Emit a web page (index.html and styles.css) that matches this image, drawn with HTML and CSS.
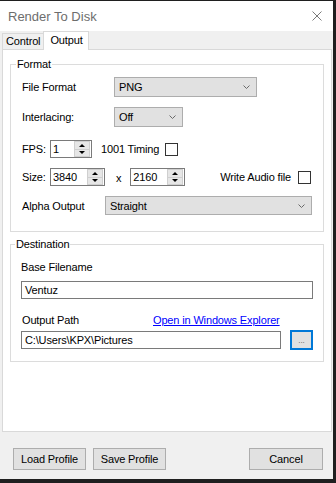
FILE: index.html
```html
<!DOCTYPE html>
<html lang="en">
<head>
    <meta charset="UTF-8">
    <meta name="viewport" content="width=device-width, initial-scale=1.0">
    <title>Render To Disk</title>
    <link rel="stylesheet" href="styles.css">
</head>
<body>
    <div class="window">
        <div class="titlebar">
            <span class="title">Render To Disk</span>
            <svg class="close" width="10" height="10" viewBox="0 0 10 10">
                <path d="M0.5 0.5 L9.5 9.5 M9.5 0.5 L0.5 9.5" stroke="#7a7a7a" stroke-width="1" fill="none"/>
            </svg>
        </div>

        <div class="tabs">
            <div class="tab">Control</div>
            <div class="tab active">Output</div>
        </div>

        <div class="panel">
            <fieldset class="group group-format">
                <legend>Format</legend>

                <div class="row row-file">
                    <span class="lbl lbl-combo">File Format</span>
                    <div class="combo combo-file">
                        <span>PNG</span>
                        <svg class="chev" width="7" height="4" viewBox="0 0 7 4"><path d="M0.5 0.5 L3.5 3.5 L6.5 0.5" stroke="#6a6a6a" fill="none"/></svg>
                    </div>
                </div>

                <div class="row row-inter">
                    <span class="lbl lbl-combo">Interlacing:</span>
                    <div class="combo combo-inter">
                        <span>Off</span>
                        <svg class="chev" width="7" height="4" viewBox="0 0 7 4"><path d="M0.5 0.5 L3.5 3.5 L6.5 0.5" stroke="#6a6a6a" fill="none"/></svg>
                    </div>
                </div>

                <div class="row row-fps">
                    <span class="lbl lbl-short">FPS:</span>
                    <div class="spin spin-fps">
                        <span class="spin-val">1</span>
                        <div class="spin-btns">
                            <span class="spin-up"></span>
                            <span class="spin-down"></span>
                        </div>
                    </div>
                    <span class="timing">1001 Timing</span>
                    <span class="check"></span>
                </div>

                <div class="row row-size">
                    <span class="lbl lbl-short">Size:</span>
                    <div class="spin spin-size">
                        <span class="spin-val">3840</span>
                        <div class="spin-btns">
                            <span class="spin-up"></span>
                            <span class="spin-down"></span>
                        </div>
                    </div>
                    <span class="times">x</span>
                    <div class="spin spin-size">
                        <span class="spin-val">2160</span>
                        <div class="spin-btns">
                            <span class="spin-up"></span>
                            <span class="spin-down"></span>
                        </div>
                    </div>
                    <span class="audio">Write Audio file</span>
                    <span class="check"></span>
                </div>

                <div class="row row-alpha">
                    <span class="lbl lbl-alpha">Alpha Output</span>
                    <div class="combo combo-alpha">
                        <span>Straight</span>
                        <svg class="chev" width="7" height="4" viewBox="0 0 7 4"><path d="M0.5 0.5 L3.5 3.5 L6.5 0.5" stroke="#6a6a6a" fill="none"/></svg>
                    </div>
                </div>
            </fieldset>

            <fieldset class="group group-dest">
                <legend>Destination</legend>

                <div class="field-label first">Base Filename</div>
                <div class="textbox">Ventuz</div>

                <div class="field-label path-head">
                    <span class="path-lbl">Output Path</span>
                    <a href="#" class="explorer">Open in Windows Explorer</a>
                </div>
                <div class="path-row">
                    <div class="textbox textbox-path">C:\Users\KPX\Pictures</div>
                    <button class="browse">...</button>
                </div>
            </fieldset>
        </div>

        <div class="footer">
            <button class="btn">Load Profile</button>
            <button class="btn btn-save">Save Profile</button>
            <button class="btn btn-cancel">Cancel</button>
        </div>
    </div>
</body>
</html>
```

FILE: styles.css
```css
body {
    margin: 0;
    background-color: #1f1f1f;
    font-family: "Liberation Sans", Arial, sans-serif;
    font-size: 11px;
    letter-spacing: -0.15px;
    color: #000;
}
.window {
    width: 333px;
    height: 478px;
    margin-top: 1px;
    background-color: #f0f0f0;
    display: flex;
    flex-direction: column;
}

/* title bar */
.titlebar {
    height: 30px;
    flex: none;
    background-color: #fff;
    display: flex;
    align-items: center;
    justify-content: space-between;
    padding: 0 11px 0 8px;
}
.title {
    color: #6d6d6d;
    font-size: 13px;
    letter-spacing: 0;
}
.close {
    display: block;
}

/* tabs */
.tabs {
    height: 18px;
    flex: none;
    display: flex;
    align-items: flex-end;
    padding-left: 2px;
}
.tab {
    height: 15px;
    line-height: 15px;
    padding: 0 3px;
    border: 1px solid #d9d9d9;
    border-bottom: none;
    background-color: #f0f0f0;
}
.tab.active {
    height: 18px;
    line-height: 16px;
    padding: 0 5px 0 6px;
    background-color: #fff;
    margin-left: -1px;
    margin-bottom: -1px;
    position: relative;
}

/* tab page */
.panel {
    height: 383px;
    box-sizing: border-box;
    flex: none;
    margin: 0 1px 0 2px;
    border: 1px solid #d9d9d9;
    background-color: #fff;
    padding: 7px 7px 0 7px;
}
.group {
    margin: 0;
    min-width: 0;
    border: 1px solid #dcdcdc;
    padding: 6px 10px 16px 11px;
}
.group legend {
    padding: 0 1px;
    margin-left: -6px;
    line-height: 14px;
}
.group-dest {
    margin-top: 5px;
    padding: 0 10px 11px 10px;
}

/* format rows */
.row {
    display: flex;
    align-items: center;
}
.row-file { height: 20px; }
.row-inter { height: 20px; margin-top: 10px; }
.row-fps { height: 18px; margin-top: 13px; }
.row-size { height: 18px; margin-top: 10px; }
.row-alpha { height: 19px; margin-top: 10px; }

.lbl {
    flex: none;
}
.lbl-combo { width: 92px; }
.lbl-short { width: 28px; }
.lbl-alpha { width: 83px; }

.combo {
    box-sizing: border-box;
    height: 100%;
    background-color: #e1e1e1;
    border: 1px solid #adadad;
    display: flex;
    align-items: center;
    justify-content: space-between;
    padding: 0 6px 0 4px;
}
.combo-file { width: 143px; }
.combo-inter { width: 69px; }
.combo-alpha { width: 207px; }
.chev {
    display: block;
}

.spin {
    box-sizing: border-box;
    height: 18px;
    border: 1px solid #7a7a7a;
    background-color: #fff;
    display: flex;
    align-items: center;
    justify-content: space-between;
    padding: 0 1px 0 2px;
}
.spin-fps { width: 42px; }
.spin-size { width: 55px; }
.spin-btns {
    width: 16px;
    height: 16px;
    display: flex;
    flex-direction: column;
}
.spin-up,
.spin-down {
    flex: 1;
    background-color: #e6e6e6;
    border: 1px solid #cfcfcf;
    display: flex;
    align-items: center;
    justify-content: center;
}
.spin-down {
    border-top: none;
}
.spin-up::after {
    content: "";
    border-left: 3px solid transparent;
    border-right: 3px solid transparent;
    border-bottom: 3px solid #000;
}
.spin-down::after {
    content: "";
    border-left: 3px solid transparent;
    border-right: 3px solid transparent;
    border-top: 3px solid #000;
}

.timing {
    margin-left: 9px;
}
.check {
    width: 13px;
    height: 13px;
    box-sizing: border-box;
    border: 1px solid #333;
    background-color: #fff;
    margin-left: 6px;
    flex: none;
}
.times {
    margin: 2px 9px 0 11px;
}
.audio {
    margin-left: auto;
    margin-right: 1px;
}
.row-size .check {
    margin-right: 2px;
}

/* destination */
.field-label {
    height: 14px;
    line-height: 14px;
}
.field-label.first {
    margin-top: 9px;
}
.textbox {
    box-sizing: border-box;
    height: 18px;
    line-height: 16px;
    border: 1px solid #7a7a7a;
    padding: 0 3px;
    margin-top: 7px;
}
.path-head {
    margin-top: 14px;
    display: flex;
}
.path-lbl {
    width: 131px;
    padding-left: 1px;
}
.explorer {
    color: #0000ff;
}
.path-row {
    margin-top: 3px;
    display: flex;
    align-items: center;
    justify-content: space-between;
}
.textbox-path {
    width: 260px;
    margin-top: 0;
}
.browse {
    width: 23px;
    height: 20px;
    padding: 0 0 3px;
    margin: 0;
    box-sizing: border-box;
    border: 2px solid #0078d7;
    background-color: #e1e1e1;
    font-family: "Liberation Sans", Arial, sans-serif;
    font-size: 8px;
    color: #555;
    display: flex;
    align-items: flex-end;
    justify-content: center;
}

/* footer */
.footer {
    flex: 1;
    display: flex;
    align-items: flex-start;
    padding: 16px 10px 0 13px;
}
.btn {
    height: 22px;
    width: 73px;
    margin: 0;
    padding: 0;
    border: 1px solid #adadad;
    background-color: #e1e1e1;
    font-family: "Liberation Sans", Arial, sans-serif;
    font-size: 11px;
    letter-spacing: -0.15px;
    color: #000;
}
.btn-save {
    margin-left: 7px;
}
.btn-cancel {
    margin-left: auto;
    width: 74px;
}
```
